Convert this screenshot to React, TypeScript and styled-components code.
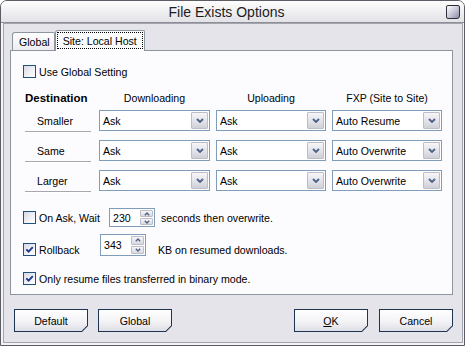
import * as React from 'react';
import styled, { createGlobalStyle } from 'styled-components';

const GlobalStyle = createGlobalStyle`
  html, body {
    margin: 0;
    padding: 0;
    background: #ffffff;
  }
  body {
    font-family: "Liberation Sans", Arial, sans-serif;
    font-size: 10.6px;
    color: #000000;
  }
`;

const Window = styled.div`
  width: 465px;
  height: 346px;
  box-sizing: border-box;
  border: 1px solid #5c5c66;
  border-radius: 7px 7px 0 0;
  background: #f4f4f7;
  display: flex;
  flex-direction: column;
  overflow: hidden;
`;

const TitleBar = styled.div`
  height: 22px;
  flex: none;
  box-sizing: border-box;
  display: flex;
  align-items: center;
  padding: 1px 4px 0 6px;
  background: linear-gradient(#fdfdfd, #ededf0 60%, #e2e2e7);
  border-bottom: 1px solid #8e8e98;
`;

const Title = styled.div`
  flex: 1;
  text-align: center;
  font-size: 14px;
  color: #1c1c1c;
`;

const CloseButton = styled.div`
  width: 14px;
  height: 14px;
  box-sizing: border-box;
  border: 1px solid #2e2e3a;
  border-radius: 2px 2px 3px 2px;
  background: linear-gradient(135deg, #ffffff, #c4c4d4 55%, #8c8ca6);
`;

const Frame = styled.div`
  flex: 1;
  display: flex;
  padding: 0 2px 2px 2px;
`;

const Body = styled.div`
  flex: 1;
  display: flex;
  flex-direction: column;
  border: 1px solid #a4a4ae;
  background: #e4e4ea;
  padding: 6px 9px 10px 6px;
`;

const TabStrip = styled.div`
  height: 20px;
  display: flex;
  align-items: flex-end;
  padding-left: 2px;
`;

const Tab = styled.div<{ $active?: boolean }>`
  position: relative;
  z-index: 2;
  box-sizing: border-box;
  display: flex;
  align-items: center;
  border: 1px solid #8c95a0;
  border-bottom: none;
  border-radius: 3px 2px 0 0;
  height: ${p => (p.$active ? '21px' : '18px')};
  margin-bottom: ${p => (p.$active ? '-1px' : '0')};
  padding: ${p => (p.$active ? '1px 1px 2px 1px' : '0 4px 0 6px')};
  background: ${p => (p.$active ? '#fcfcfe' : 'linear-gradient(#ffffff, #ececf1)')};
`;

const FocusRing = styled.span`
  height: 100%;
  box-sizing: border-box;
  display: flex;
  align-items: center;
  padding: 0 5px;
  border: 1px dotted #000000;
`;

const Panel = styled.div`
  height: 245px;
  box-sizing: border-box;
  border: 1px solid #8c95a0;
  background: #fcfcfe;
  padding: 14px 10px 0 12px;
  display: flex;
  flex-direction: column;
`;

const CheckRow = styled.label<{ $width?: number }>`
  display: flex;
  align-items: center;
  gap: 3px;
  height: 13px;
  width: ${p => (p.$width ? `${p.$width}px` : 'auto')};
  flex: none;
`;

const Box = styled.span`
  width: 13px;
  height: 13px;
  box-sizing: border-box;
  flex: none;
  border: 1px solid #1c5180;
  background: linear-gradient(135deg, #d8d8e4, #f6f6fa 70%, #ffffff);
  display: flex;
  align-items: center;
  justify-content: center;
`;

const Columns = styled.div`
  display: grid;
  grid-template-columns: 68px 111px 110px 110px;
  column-gap: 6px;
  margin-left: 2px;
`;

const HeaderGrid = styled(Columns)`
  height: 16px;
  margin-top: 12px;
  align-items: center;
`;

const RowsGrid = styled(Columns)`
  grid-auto-rows: 22px;
  row-gap: 8px;
  margin-top: 4px;
`;

const HeadCell = styled.div<{ $bold?: boolean }>`
  text-align: ${p => (p.$bold ? 'left' : 'center')};
  font-weight: ${p => (p.$bold ? 'bold' : 'normal')};
  font-size: ${p => (p.$bold ? '11.5px' : '10.6px')};
`;

const RowLabel = styled.div`
  width: 66px;
  box-sizing: border-box;
  display: flex;
  align-items: center;
  padding-left: 12px;
  border-bottom: 1px solid #a7a7ad;
  box-shadow: 0 1px 0 #ffffff;
`;

const Select = styled.div`
  height: 21px;
  box-sizing: border-box;
  display: flex;
  align-items: stretch;
  border: 1px solid #7f9db9;
  background: #ffffff;
`;

const SelectText = styled.span`
  flex: 1;
  display: flex;
  align-items: center;
  padding-left: 3px;
`;

const DropButton = styled.span`
  width: 17px;
  margin: 1px;
  box-sizing: border-box;
  border: 1px solid #bdbdc8;
  border-radius: 1px;
  background: linear-gradient(#f6f6f9, #dcdce4 70%, #cfcfd9);
  display: flex;
  align-items: center;
  justify-content: center;
`;

const OptionRow = styled.div<{ $top: number }>`
  height: 19px;
  display: flex;
  align-items: center;
  margin-top: ${p => p.$top}px;
`;

const Spin = styled.div<{ $height: number; $raise?: number }>`
  width: 46px;
  height: ${p => p.$height}px;
  box-sizing: border-box;
  flex: none;
  display: flex;
  border: 1px solid #7f9db9;
  background: #ffffff;
  margin-bottom: ${p => p.$raise || 0}px;
`;

const SpinText = styled.span`
  flex: 1;
  display: flex;
  align-items: center;
  padding-left: 3px;
`;

const SpinButtons = styled.span`
  width: 13px;
  display: flex;
  flex-direction: column;
  padding: 1px 1px 1px 0;
  gap: 1px;
`;

const SpinArrow = styled.span`
  flex: 1;
  box-sizing: border-box;
  border: 1px solid #bdbdc8;
  border-radius: 1px;
  background: linear-gradient(#f6f6f9, #d8d8e2);
  display: flex;
  align-items: center;
  justify-content: center;
`;

const AfterText = styled.span<{ $gap: number }>`
  margin-left: ${p => p.$gap}px;
`;

const ButtonBar = styled.div`
  display: flex;
  align-items: center;
  margin-top: 14px;
  padding-left: 4px;
`;

const ButtonGroup = styled.div<{ $gap: number }>`
  display: flex;
  gap: ${p => p.$gap}px;
`;

const Spacer = styled.div`
  flex: 1;
`;

const Btn = styled.button`
  width: 74px;
  height: 23px;
  padding: 1px;
  border: none;
  background: #1f3450;
  clip-path: polygon(0 0, 100% 0, 100% calc(100% - 6px), calc(100% - 6px) 100%, 0 100%);
  font: inherit;
  color: #000000;
  cursor: default;
`;

const BtnFace = styled.span`
  height: 100%;
  display: flex;
  align-items: center;
  justify-content: center;
  background: linear-gradient(#ffffff, #f3f3f6 55%, #dedee6);
  clip-path: polygon(0 0, 100% 0, 100% calc(100% - 5.4px), calc(100% - 5.4px) 100%, 0 100%);
`;

const Chevron = ({ up }: { up?: boolean }) => (
  <svg width="8" height="5" viewBox="0 0 8 5">
    <path
      d={up ? 'M1 4 L4 1 L7 4' : 'M1 1 L4 4 L7 1'}
      fill="none"
      stroke="#4d6185"
      strokeWidth="1.8"
    />
  </svg>
);

const SmallChevron = ({ up }: { up?: boolean }) => (
  <svg width="6" height="4" viewBox="0 0 6 4">
    <path
      d={up ? 'M0.8 3.3 L3 1 L5.2 3.3' : 'M0.8 0.7 L3 3 L5.2 0.7'}
      fill="none"
      stroke="#4d6185"
      strokeWidth="1.3"
    />
  </svg>
);

const CheckBox = ({ checked }: { checked?: boolean }) => (
  <Box>
    {checked && (
      <svg width="9" height="9" viewBox="0 0 9 9">
        <path d="M1.3 4.3 L3.6 6.6 L7.8 2.2" fill="none" stroke="#21398c" strokeWidth="1.9" />
      </svg>
    )}
  </Box>
);

const Dropdown = ({ value }: { value: string }) => (
  <Select>
    <SelectText>{value}</SelectText>
    <DropButton>
      <Chevron />
    </DropButton>
  </Select>
);

const SpinBox = (props: { value: string; height: number; raise?: number }) => (
  <Spin $height={props.height} $raise={props.raise}>
    <SpinText>{props.value}</SpinText>
    <SpinButtons>
      <SpinArrow>
        <SmallChevron up />
      </SpinArrow>
      <SpinArrow>
        <SmallChevron />
      </SpinArrow>
    </SpinButtons>
  </Spin>
);

const rows = [
  { label: 'Smaller', down: 'Ask', up: 'Ask', fxp: 'Auto Resume' },
  { label: 'Same', down: 'Ask', up: 'Ask', fxp: 'Auto Overwrite' },
  { label: 'Larger', down: 'Ask', up: 'Ask', fxp: 'Auto Overwrite' },
];

export default function App() {
  return (
    <>
      <GlobalStyle />
      <Window>
        <TitleBar>
          <Title>File Exists Options</Title>
          <CloseButton />
        </TitleBar>
        <Frame>
          <Body>
            <TabStrip>
              <Tab>Global</Tab>
              <Tab $active>
                <FocusRing>Site: Local Host</FocusRing>
              </Tab>
            </TabStrip>
            <Panel>
              <CheckRow>
                <CheckBox />
                Use Global Setting
              </CheckRow>

              <HeaderGrid>
                <HeadCell $bold>Destination</HeadCell>
                <HeadCell>Downloading</HeadCell>
                <HeadCell>Uploading</HeadCell>
                <HeadCell>FXP (Site to Site)</HeadCell>
              </HeaderGrid>

              <RowsGrid>
                {rows.map(r => (
                  <React.Fragment key={r.label}>
                    <RowLabel>{r.label}</RowLabel>
                    <Dropdown value={r.down} />
                    <Dropdown value={r.up} />
                    <Dropdown value={r.fxp} />
                  </React.Fragment>
                ))}
              </RowsGrid>

              <OptionRow $top={16}>
                <CheckRow $width={86}>
                  <CheckBox />
                  On Ask, Wait
                </CheckRow>
                <SpinBox value="230" height={19} />
                <AfterText $gap={6}>seconds then overwrite.</AfterText>
              </OptionRow>

              <OptionRow $top={13}>
                <CheckRow $width={77}>
                  <CheckBox checked />
                  Rollback
                </CheckRow>
                <SpinBox value="343" height={22} raise={9} />
                <AfterText $gap={12}>KB on resumed downloads.</AfterText>
              </OptionRow>

              <OptionRow $top={10}>
                <CheckRow>
                  <CheckBox checked />
                  Only resume files transferred in binary mode.
                </CheckRow>
              </OptionRow>
            </Panel>

            <ButtonBar>
              <ButtonGroup $gap={10}>
                <Btn><BtnFace>Default</BtnFace></Btn>
                <Btn><BtnFace>Global</BtnFace></Btn>
              </ButtonGroup>
              <Spacer />
              <ButtonGroup $gap={11}>
                <Btn><BtnFace><u>O</u>K</BtnFace></Btn>
                <Btn><BtnFace>Cancel</BtnFace></Btn>
              </ButtonGroup>
            </ButtonBar>
          </Body>
        </Frame>
      </Window>
    </>
  );
}
